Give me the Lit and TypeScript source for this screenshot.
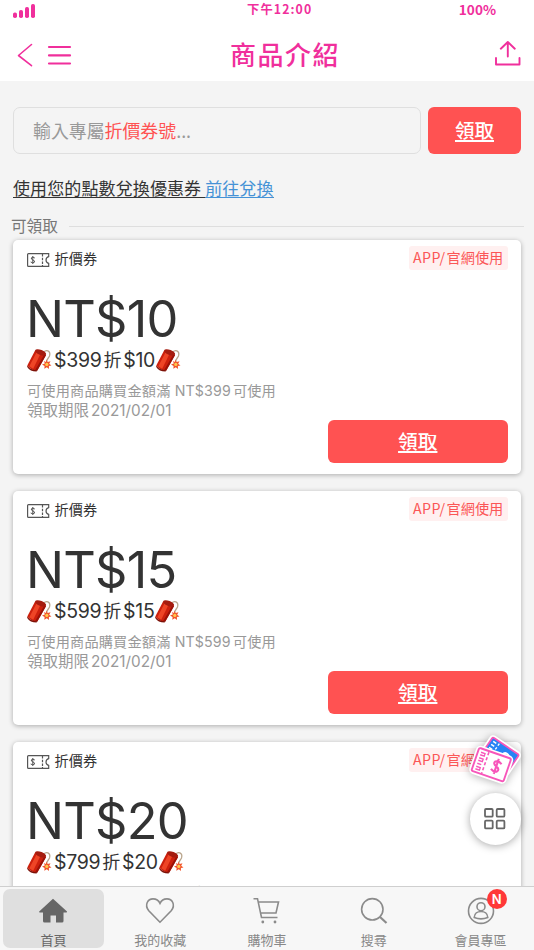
import { LitElement, html, css, svg } from "lit";
import { customElement, property } from "lit/decorators.js";

const baseFont = css`
  :host {
    font-family: "Inter", "Noto Sans CJK TC", sans-serif;
  }
  svg {
    display: block;
    overflow: visible;
  }
`;

const firecracker = () => html`
  <svg class="cracker" width="25" height="24" viewBox="0 0 25 24">
    <path d="M16 5C19 .5 24 3 22.500 8C21.800 10 19.500 10.500 19.500 15" fill="none" stroke="#b9a58c" stroke-width="1.300" />
    <path d="M8.100 2.600L19 7.100L10.300 22.500Q4.500 23 .3 17.600Z" fill="#cc200d" />
    <path d="M10 3.600L13.800 5.200L6.200 20.800L2.300 18.300Z" fill="#ee4526" />
    <path d="M17.300 6.600L19 7.200L10.500 22.300L7.900 22.500Z" fill="#981208" />
    <ellipse cx="13.600" cy="4.400" rx="5.900" ry="2.600" transform="rotate(22 13.600 4.400)" fill="#a51c0f" />
    <path d="M.3 17.600Q4 22.600 10.500 22.200L9.500 23.500Q3 23.500 .2 19Z" fill="#7c1007" />
    <path d="M19.500 11.500L20.600 14.100L23.500 13.300L22.200 15.800L24.500 17.500L21.900 18.100L22 21L19.800 19.200L17.300 20.700L17.600 17.900L15 16.500L17.800 15.500L17 12.900L19 14Z" fill="#f2552c" />
    <circle cx="19.800" cy="16.400" r="1.600" fill="#ffc94d" />
  </svg>
`;

@customElement("coupon-card")
export class CouponCard extends LitElement {
  static styles = [
    baseFont,
    css`
      :host {
        display: block;
        box-sizing: border-box;
        height: 234px;
        padding: 6px 13px 11px 14px;
        border-radius: 5px;
        background: #fff;
        box-shadow: 0 1px 5px rgba(0, 0, 0, 0.3);
        color: #333;
      }
      .top {
        display: flex;
        align-items: flex-start;
        height: 46px;
      }
      .ticket {
        margin-top: 7px;
        margin-left: -0.5px;
      }
      .kind {
        margin-left: 5px;
        font: 14.2px/25px "Noto Sans CJK TC", sans-serif;
      }
      .tag {
        margin-left: auto;
        width: 99px;
        box-sizing: border-box;
        padding-left: 4px;
        border-radius: 3px;
        background: #fff0f0;
        color: #fb5656;
        font: 14.2px/23px "Noto Sans CJK TC", sans-serif;
        height: 24px;
        white-space: nowrap;
      }
      .latin {
        letter-spacing: 0.4px;
        margin-right: 1px;
      }
      .amount {
        height: 56px;
        margin-left: -1px;
        font-size: 50.5px;
        line-height: 53px;
        letter-spacing: -0.8px;
      }
      .deal {
        display: flex;
        align-items: center;
        height: 25px;
        font-size: 19.5px;
        line-height: 25px;
        letter-spacing: -0.3px;
      }
      .deal .off {
        font-size: 18px;
        margin: 0 2px 0 2px;
      }
      .deal .value {
        margin-right: 1px;
      }
      .deal .lead {
        margin-left: 2px;
      }
      .note {
        margin-top: 7px;
        height: 20px;
        font-size: 14.2px;
        line-height: 21px;
        letter-spacing: 0.16px;
        color: #999;
        white-space: nowrap;
      }
      .note .num {
        margin-right: 2px;
      }
      .until {
        height: 20px;
        font-size: 15.5px;
        line-height: 21px;
        color: #999;
      }
      .until .date {
        margin-left: 2px;
        font-size: 15.3px;
      }
      .claim {
        width: 180.5px;
        height: 43.5px;
        margin-left: auto;
        border-radius: 6px;
        background: #ff5252;
        color: #fff;
        font: 500 19.7px/42px "Noto Sans CJK TC", sans-serif;
        text-align: center;
        text-decoration: underline;
        text-decoration-thickness: 1.5px;
        text-underline-offset: 2px;
      }
    `,
  ];

  @property() value = "";
  @property() minimum = "";

  render() {
    return html`
      <div class="top">
        <svg class="ticket" width="23" height="14" viewBox="0 0 23 14" fill="none" stroke="#555">
          <path d="M1.500 .7H21.700V3.600A3.500 3.500 0 0 0 21.700 10.400V13.300H1.500Q.6 13.300 .6 12.400V1.600Q.6 .7 1.500 .7Z" stroke-width="1.200" />
          <path d="M15.500 1V13" stroke-width="1.200" stroke-dasharray="2.500 1.200" />
          <path d="M7.800 5Q5.700 3.400 4.500 4.700Q3.600 6.200 5.800 6.900Q8.300 7.700 7.300 9.300Q5.800 10.500 3.700 9M5.800 3V11" />
        </svg>
        <span class="kind">折價券</span>
        <span class="tag"><span class="latin">APP/</span>官網使用</span>
      </div>
      <div class="amount">NT$${this.value}</div>
      <div class="deal">
        ${firecracker()}<span class="lead">$${this.minimum}</span
        ><span class="off">折</span><span class="value">$${this.value}</span>${firecracker()}
      </div>
      <div class="note">可使用商品購買金額滿 <span class="num">NT$${this.minimum}</span>可使用</div>
      <div class="until">領取期限<span class="date">2021/02/01</span></div>
      <div class="claim">領取</div>
    `;
  }
}

const tabIcons = {
  home: svg`<path d="M15 .8L29 13.500Q29.500 14.500 28 14.500H25.500V23Q25.500 24.500 24 24.500H18V17.500H12.500V24.500H6.500Q5 24.500 5 23V14.500H2Q.6 14.500 1.200 13.500Z" fill="#666" />`,
  heart: svg`<path d="M15 24.200L3.800 12.800C-1 6.500 3 .9 8 .9C11.500 .9 13.800 2.700 15 5.300C16.200 2.700 18.500 .9 22 .9C27 .9 31 6.500 26.200 12.800Z" />`,
  cart: svg`<path d="M1.500 .7H5.500L9.500 19.500H25.500M6.300 4H26.500L24 15H8.700" /><circle cx="10.800" cy="24" r="1.400" fill="#8b8b8b" stroke="none" /><circle cx="23" cy="24" r="1.400" fill="#8b8b8b" stroke="none" />`,
  search: svg`<circle cx="13.300" cy="11.300" r="10.700" /><path d="M21 19L27.500 25" stroke-width="2.200" />`,
  member: svg`<circle cx="15" cy="12.900" r="12.500" /><circle cx="15" cy="8.700" r="4" /><path d="M8.200 19.500C8.500 11.500 21.500 11.500 21.800 19.500Q15 22.300 8.200 19.500Z" />`,
};

@customElement("app-root")
export class AppRoot extends LitElement {
  static styles = [
    baseFont,
    css`
      :host {
        position: relative;
        display: flex;
        flex-direction: column;
        width: 534px;
        height: 950px;
        overflow: hidden;
        background: #f4f4f4;
      }
      .header {
        flex: none;
        height: 81px;
        background: #fff;
        color: #f02f9c;
      }
      .status {
        display: grid;
        grid-template-columns: 234px 1fr auto;
        height: 29px;
        padding: 0 38px 0 13px;
        font: 700 12.3px/18px "Noto Sans CJK TC", sans-serif;
      }
      .signal {
        margin-top: 4px;
      }
      .clock {
        letter-spacing: 1.1px;
        white-space: nowrap;
      }
      .battery {
        font-size: 13.6px;
      }
      .nav {
        display: grid;
        grid-template-columns: 216px auto 1fr;
        align-items: center;
        height: 52px;
        padding: 0 14px;
      }
      .left {
        display: flex;
        gap: 14px;
        padding-left: 3px;
      }
      .title {
        margin-top: -2px;
        font: 500 26px/52px "Noto Sans CJK TC", sans-serif;
        letter-spacing: 1.5px;
      }
      .share {
        justify-self: end;
        margin-top: -4px;
      }
      .page {
        flex: 1;
        min-height: 0;
        overflow: hidden;
        padding: 26px 13px 0;
      }
      .redeem {
        display: flex;
        gap: 7.5px;
      }
      .code {
        flex: 1;
        box-sizing: border-box;
        height: 46.5px;
        padding-left: 19px;
        border: 1px solid #dfdfdf;
        border-radius: 7px;
        color: #999;
        font: 17.9px/44px "Noto Sans CJK TC", sans-serif;
      }
      .hot {
        color: #ff5252;
      }
      .apply {
        width: 93px;
        border-radius: 6px;
        background: #ff5252;
        color: #fff;
        font: 500 19.5px/46px "Noto Sans CJK TC", sans-serif;
        text-align: center;
        text-decoration: underline;
        text-decoration-thickness: 1.5px;
        text-underline-offset: 2px;
      }
      .points {
        margin-top: 21px;
        height: 26px;
        font: 17px/26px "Noto Sans CJK TC", sans-serif;
        letter-spacing: 0.11px;
        color: #333;
        text-decoration: underline;
        text-underline-offset: 2px;
      }
      .go {
        color: #4592d6;
        text-decoration: underline;
        text-underline-offset: 2px;
      }
      .section {
        display: flex;
        align-items: center;
        gap: 11px;
        height: 22px;
        margin: 15px -3px 2px -2px;
        color: #777;
        font: 15.6px/18px "Noto Sans CJK TC", sans-serif;
      }
      .label {
        padding-bottom: 4px;
      }
      .rule {
        flex: 1;
        height: 1.5px;
        background: #dedede;
      }
      .cards {
        display: grid;
        gap: 17px;
      }
      .tabs {
        z-index: 2;
        flex: none;
        display: grid;
        grid-template-columns: repeat(5, 1fr);
        box-sizing: border-box;
        height: 64px;
        border-top: 1px solid #cfcfcf;
        background: #f7f7f7;
      }
      .tab {
        position: relative;
        display: flex;
        flex-direction: column;
        align-items: center;
        gap: 8px;
        box-sizing: border-box;
        height: 59px;
        margin: 2px 2.5px;
        padding-top: 9px;
        border-radius: 7px;
        color: #888;
        font: 13px/16px "Noto Sans CJK TC", sans-serif;
      }
      .active {
        background: #dfdfdf;
        color: #666;
      }
      .glyph {
        flex: none;
        fill: none;
        stroke: #8b8b8b;
        stroke-width: 1.6;
      }
      .active .glyph {
        stroke: none;
      }
      .badge {
        position: absolute;
        top: 0;
        left: 57px;
        width: 20px;
        height: 20px;
        border-radius: 50%;
        background: #ff3838;
        color: #fff;
        font: 600 13px/20px "Inter", sans-serif;
        text-align: center;
      }
      .promo {
        position: absolute;
        left: 467px;
        top: 732px;
        filter: drop-shadow(0 1px 4px rgba(0, 0, 0, 0.3));
      }
      .fab {
        position: absolute;
        left: 469.5px;
        top: 793px;
        display: grid;
        place-items: center;
        width: 51.5px;
        height: 52px;
        border-radius: 50%;
        background: #fff;
        box-shadow: 0 1px 9px rgba(0, 0, 0, 0.35);
      }
    `,
  ];

  private tab(label: string, icon: unknown, active = false, badge = "") {
    return html`
      <div class="tab ${active ? "active" : ""}">
        <svg class="glyph" width="30" height="26" viewBox="0 0 30 26">${icon}</svg>
        <span>${label}</span>
        ${badge ? html`<span class="badge">${badge}</span>` : ""}
      </div>
    `;
  }

  render() {
    return html`
      <header class="header">
        <div class="status">
          <svg class="signal" width="23" height="14" viewBox="0 0 23 14" fill="#f02f9c">
            <rect x="0" y="8.500" width="4" height="5.500" rx="1.800" />
            <rect x="6" y="6" width="4" height="8" rx="1.800" />
            <rect x="12" y="3" width="4" height="11" rx="1.800" />
            <rect x="18" y="0" width="4" height="14" rx="1.800" />
          </svg>
          <span class="clock">下午12:00</span>
          <span class="battery">100%</span>
        </div>
        <div class="nav">
          <div class="left">
            <svg width="17" height="24" viewBox="0 0 17 24" fill="none" stroke="#f02f9c" stroke-width="1.600" stroke-linecap="round" stroke-linejoin="round">
              <path d="M14.500 1.500L1.500 12.500L14.500 22.700" />
            </svg>
            <svg width="24" height="24" viewBox="0 0 24 24" fill="none" stroke="#f02f9c" stroke-width="2.200" stroke-linecap="round">
              <path d="M1 4H22M1 12.400H22M1 20.500H22" />
            </svg>
          </div>
          <span class="title">商品介紹</span>
          <svg class="share" width="25" height="26" viewBox="0 0 25 26" fill="none" stroke="#f02f9c" stroke-width="1.900" stroke-linecap="round" stroke-linejoin="round">
            <path d="M1 18V24.500H24.500V18M12.800 16.500V2M5.800 8.700L12.800 2L19.800 8.700" />
          </svg>
        </div>
      </header>
      <main class="page">
        <div class="redeem">
          <div class="code">輸入專屬<span class="hot">折價券號</span>...</div>
          <div class="apply">領取</div>
        </div>
        <div class="points">使用您的點數兌換優惠券 <span class="go">前往兌換</span></div>
        <div class="section"><span class="label">可領取</span><span class="rule"></span></div>
        <div class="cards">
          <coupon-card value="10" minimum="399"></coupon-card>
          <coupon-card value="15" minimum="599"></coupon-card>
          <coupon-card value="20" minimum="799"></coupon-card>
        </div>
      </main>
      <svg class="promo" width="57" height="57" viewBox="0 0 54 54">
        <g transform="translate(31 22) rotate(34)">
          <rect x="-15" y="-10.500" width="30" height="21" rx="1.500" fill="#2684f5" stroke="#fff" stroke-width="5" />
          <rect x="-15" y="-10.500" width="30" height="21" rx="1.500" fill="#2684f5" stroke="#f756ba" stroke-width="1.600" />
          <path d="M-6.500 -9V10" stroke="#fff" stroke-width="1.300" stroke-dasharray="2.500 1.800" />
          <path d="M-12.500 -7.500H-9M-12.500 -4H-9M-12.500 -.5H-9" stroke="#fff" stroke-width="1.400" />
          <circle cx="5" cy="-2" r="3" fill="none" stroke="#fff" stroke-width="1.800" />
        </g>
        <g transform="translate(23 31) rotate(19)">
          <rect x="-16" y="-11.500" width="32" height="23" rx="2" fill="#fff" stroke="#fff" stroke-width="5" />
          <path d="M-14.500 -11.500H14.500Q16 -11.500 16 -10V10Q16 11.500 14.500 11.500H-14.500Q-16 11.500 -16 10V-10Q-16 -11.500 -14.500 -11.500Z" fill="#fff" stroke="#f756ba" stroke-width="1.800" />
          <path d="M-6 -10.500V11" stroke="#f756ba" stroke-width="1.500" stroke-dasharray="3 2" />
          <path d="M-13 -8H-9V-5.500H-13M-13 -2.500H-9V0H-13M-13 3H-9M-13 6H-9V8.500H-13" fill="none" stroke="#f756ba" stroke-width="1.300" />
          <path d="M9 -3.600Q5.500 -6.200 2.700 -4.200Q.8 -1.600 5 0Q9.500 1.600 7 4.500Q4.500 6.200 1 3.900M5 -7.500V7.500" fill="none" stroke="#f756ba" stroke-width="2" />
        </g>
      </svg>
      <div class="fab">
        <svg width="22" height="22" viewBox="0 0 22 22" fill="none" stroke="#666" stroke-width="1.800">
          <rect x="1" y="1" width="7.700" height="7.700" rx="1" />
          <rect x="12.700" y="1" width="7.700" height="7.700" rx="1" />
          <rect x="1" y="12.700" width="7.700" height="7.700" rx="1" />
          <rect x="12.700" y="12.700" width="7.700" height="7.700" rx="1" />
        </svg>
      </div>
      <nav class="tabs">
        ${this.tab("首頁", tabIcons.home, true)} ${this.tab("我的收藏", tabIcons.heart)}
        ${this.tab("購物車", tabIcons.cart)} ${this.tab("搜尋", tabIcons.search)}
        ${this.tab("會員專區", tabIcons.member, false, "N")}
      </nav>
    `;
  }
}
